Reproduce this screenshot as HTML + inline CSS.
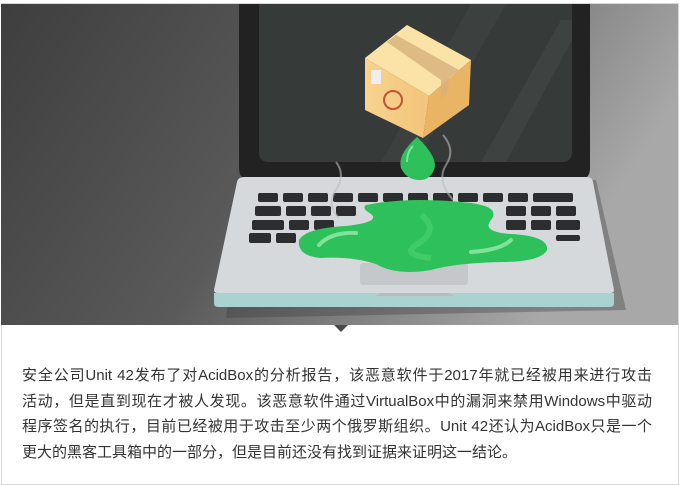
<!DOCTYPE html>
<html><head><meta charset="utf-8"><style>
body{margin:0;background:#fff;width:680px;height:485px;overflow:hidden;}
.wrap{position:absolute;left:1px;top:3px;width:676px;height:480px;border:1px solid #d8d8d8;}
svg{position:absolute;left:1px;top:0;}
.txt{position:absolute;left:22px;top:363px;width:630px;font-family:"Liberation Sans","Noto Sans CJK SC",sans-serif;font-size:15px;line-height:25.7px;color:#333;white-space:nowrap;}
.txt div{text-align:justify;text-align-last:justify;}
.txt div.l{text-align-last:left;}
</style></head><body>
<div class="wrap"></div>
<svg width="677" height="333" viewBox="0 0 677 333">
<defs>
<linearGradient id="bg" x1="0" y1="0" x2="1" y2="0.3"><stop offset="0" stop-color="#3e3e3e"/><stop offset="0.5" stop-color="#5a5a5a"/><stop offset="1" stop-color="#a8a8a8"/></linearGradient>
<linearGradient id="box1" x1="0" x2="1"><stop offset="0" stop-color="#f7d38e"/><stop offset="1" stop-color="#f2c57a"/></linearGradient>
</defs>
<rect x="0" y="4" width="677" height="321" fill="url(#bg)"/>
<polygon points="333,325 347,325 340,332" fill="#4a4a4a"/>
<polygon points="240,180 595,180 625,310 225,318" fill="#3a3a3a" opacity="0.35"/>
<path d="M238,4 H589 V168 Q589,180 577,180 H250 Q238,180 238,168 Z" fill="#222"/>
<path d="M258,4 H571 V152 Q571,162 561,162 H268 Q258,162 258,152 Z" fill="#363a38"/>
<polygon points="380,162 470,4 505,4 415,162" fill="#3f4442" opacity="0.8"/>
<polygon points="480,162 560,20 571,20 571,40 505,162" fill="#414644" opacity="0.7"/>
<path d="M243,177 H586 Q591,177 592,182 L613,290 Q613,293 609,293 H217 Q213,293 213,290 L236,182 Q237,177 243,177 Z" fill="#d5d9dc"/>
<path d="M213,293 H613 V303 Q613,307 609,307 H217 Q213,307 213,303 Z" fill="#a9d2d0"/>
<path d="M375,296 Q377,293 385,293 H443 Q451,293 453,296 Z" fill="#b8bcbf"/>
<rect x="359" y="263" width="108" height="22" rx="3" fill="#c4c8cb"/>
<g fill="#2b2d2e">
<rect x="257" y="193" width="20" height="9" rx="2"/><rect x="282" y="193" width="20" height="9" rx="2"/><rect x="307" y="193" width="20" height="9" rx="2"/><rect x="332" y="193" width="20" height="9" rx="2"/><rect x="357" y="193" width="20" height="9" rx="2"/><rect x="382" y="193" width="20" height="9" rx="2"/><rect x="407" y="193" width="20" height="9" rx="2"/><rect x="432" y="193" width="20" height="9" rx="2"/><rect x="457" y="193" width="20" height="9" rx="2"/><rect x="482" y="193" width="20" height="9" rx="2"/><rect x="507" y="193" width="20" height="9" rx="2"/><rect x="532" y="193" width="40" height="9" rx="2"/>
<rect x="254" y="206" width="26" height="10" rx="2"/><rect x="285" y="206" width="20" height="10" rx="2"/><rect x="310" y="206" width="20" height="10" rx="2"/><rect x="335" y="206" width="20" height="10" rx="2"/><rect x="505" y="206" width="20" height="10" rx="2"/><rect x="530" y="206" width="20" height="10" rx="2"/><rect x="555" y="206" width="20" height="10" rx="2"/>
<rect x="251" y="220" width="32" height="10" rx="2"/><rect x="288" y="220" width="20" height="10" rx="2"/><rect x="313" y="220" width="20" height="10" rx="2"/><rect x="505" y="220" width="20" height="10" rx="2"/><rect x="530" y="220" width="20" height="10" rx="2"/><rect x="555" y="220" width="24" height="10" rx="2"/>
<rect x="248" y="233" width="22" height="10" rx="2"/><rect x="275" y="233" width="20" height="10" rx="2"/><rect x="555" y="235" width="24" height="6" rx="2"/>
</g>
<path d="M365,205 Q410,196 470,203 Q500,207 490,220 Q480,232 510,234 Q548,236 546,250 Q540,262 500,262 Q455,263 430,270 Q395,276 375,264 Q350,256 320,258 Q296,256 298,240 Q305,228 345,226 Q380,222 370,214 Q360,208 365,205 Z" fill="#2ec05a"/>
<path d="M318,245 Q330,232 355,233" stroke="#7fe39a" stroke-width="4" fill="none" stroke-linecap="round"/>
<path d="M470,252 Q500,250 510,240" stroke="#7fe39a" stroke-width="4" fill="none" stroke-linecap="round"/>
<path d="M420,215 Q440,230 415,245 Q400,255 430,258" stroke="#49d06f" stroke-width="6" fill="none" opacity="0.7"/>
<path d="M416,137 Q438,158 433,170 Q428,181 417,180 Q405,179 400,168 Q396,155 416,137 Z" fill="#2ec05a"/>
<path d="M406,162 Q406,152 412,146" stroke="#7fe39a" stroke-width="2" fill="none"/>
<path d="M335,162 Q345,175 335,190 Q325,205 338,218" stroke="#bbb" stroke-width="2" fill="none" opacity="0.6"/>
<path d="M442,135 Q455,150 445,165 Q435,180 452,200" stroke="#bbb" stroke-width="2" fill="none" opacity="0.6"/>
<polygon points="364,58 406,25 470,60 428,96" fill="#fbe3a8"/>
<polygon points="364,58 428,96 422,138 364,110" fill="url(#box1)"/>
<polygon points="428,96 470,60 468,105 422,138" fill="#e9b565"/>
<polygon points="386,42 395,35 458,70 448,78 446,94 440,99 440,80" fill="#d7b07a" opacity="0.8"/>
<rect x="370" y="70" width="10" height="14" fill="#eee"/>
<circle cx="392" cy="100" r="9" fill="none" stroke="#c0533a" stroke-width="2"/>
</svg>
<div class="txt">
<div>安全公司Unit 42发布了对AcidBox的分析报告，该恶意软件于2017年就已经被用来进行攻击</div>
<div>活动，但是直到现在才被人发现。该恶意软件通过VirtualBox中的漏洞来禁用Windows中驱动</div>
<div>程序签名的执行，目前已经被用于攻击至少两个俄罗斯组织。Unit 42还认为AcidBox只是一个</div>
<div class="l">更大的黑客工具箱中的一部分，但是目前还没有找到证据来证明这一结论。</div>
</div>
</body></html>
